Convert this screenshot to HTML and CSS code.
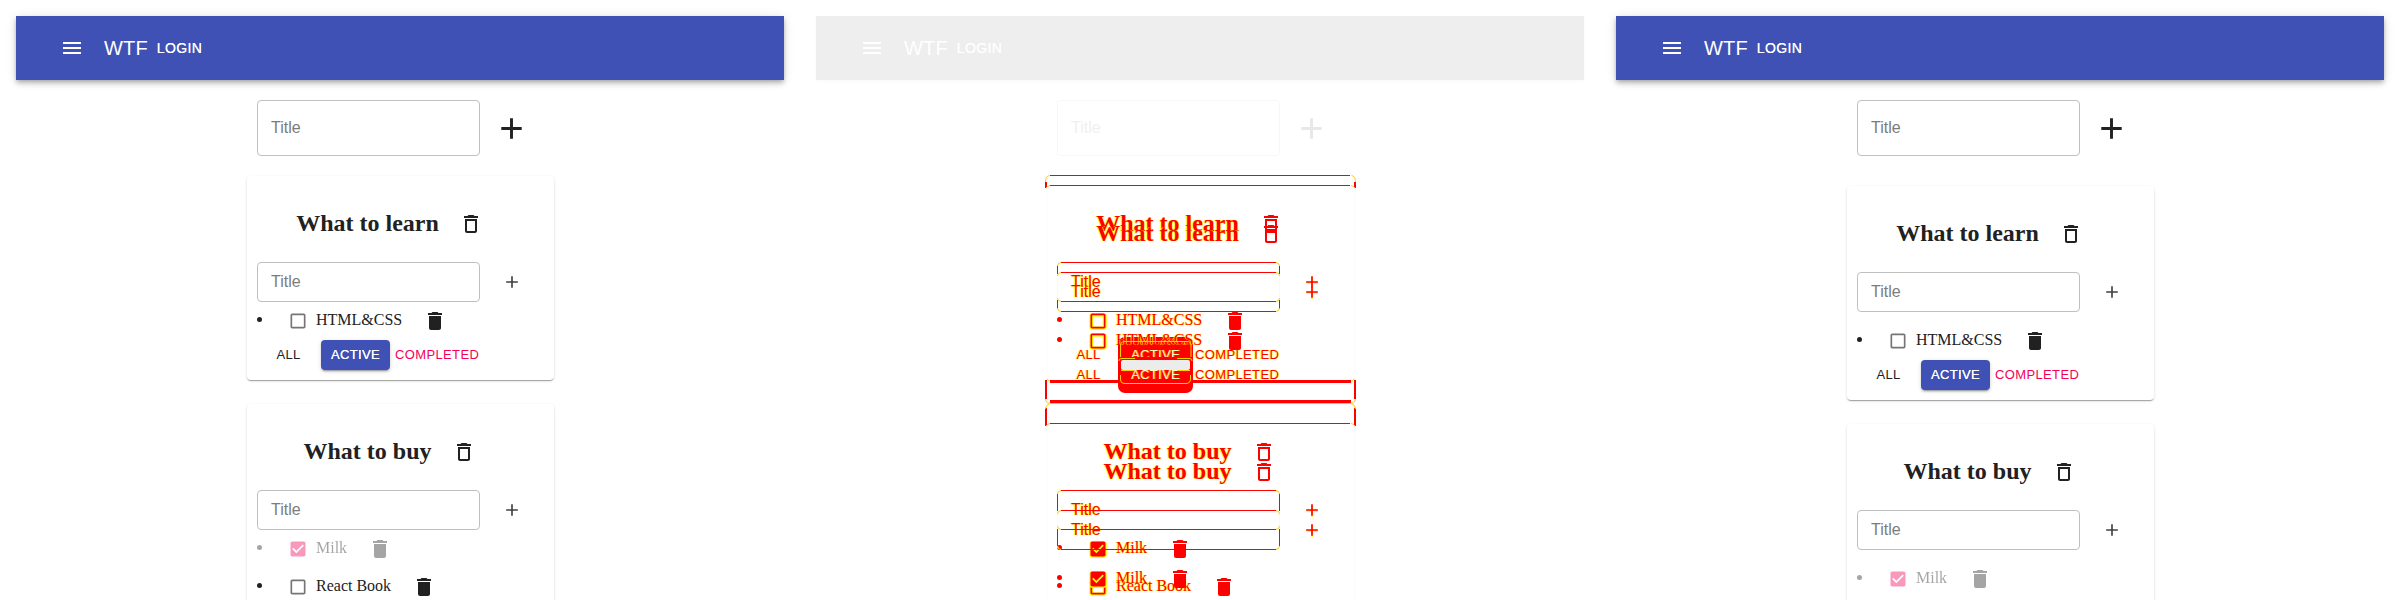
FILE: index.html
```
<!DOCTYPE html>
<html lang="en">
<head>
<meta charset="utf-8">
<title>WTF</title>
<link rel="stylesheet" href="styles.css">
</head>
<body>
<svg class="defs" aria-hidden="true">
  <symbol id="menu" viewBox="0 0 24 24"><path d="M3 18h18v-2H3v2zm0-5h18v-2H3v2zm0-7v2h18V6H3z"/></symbol>
  <symbol id="plus" viewBox="0 0 24 24"><path d="M19 13h-6v6h-2v-6H5v-2h6V5h2v6h6v2z"/></symbol>
  <symbol id="bin-o" viewBox="0 0 24 24"><path d="M6 19c0 1.100.9 2 2 2h8c1.100 0 2-.9 2-2V7H6v12zM8 9h8v10H8V9zm7.500-5l-1-1h-5l-1 1H5v2h14V4z"/></symbol>
  <symbol id="bin" viewBox="0 0 24 24"><path d="M6 19c0 1.100.9 2 2 2h8c1.100 0 2-.9 2-2V7H6v12zM19 4h-3.500l-1-1h-5l-1 1H5v2h14V4z"/></symbol>
  <symbol id="box" viewBox="0 0 24 24"><path d="M19 5v14H5V5h14m0-2H5c-1.100 0-2 .9-2 2v14c0 1.100.9 2 2 2h14c1.100 0 2-.9 2-2V5c0-1.100-.9-2-2-2z"/></symbol>
  <symbol id="checked" viewBox="0 0 24 24"><path d="M19 3H5c-1.110 0-2 .9-2 2v14c0 1.100.89 2 2 2h14c1.110 0 2-.9 2-2V5c0-1.100-.89-2-2-2zm-9 14l-5-5 1.410-1.410L10 14.170l7.590-7.590L19 8l-9 9z"/></symbol>
</svg>
<main class="panels">
  <section class="panel">
    <header class="bar"><svg class="i24"><use href="#menu"/></svg><span class="brand">WTF</span><span class="login">LOGIN</span></header>
    <div class="add"><div class="field">Title</div><svg class="i35"><use href="#plus"/></svg></div>
    <div class="cards">
      <article class="card">
        <div class="head"><h3>What to learn</h3><svg class="i24"><use href="#bin-o"/></svg></div>
        <div class="row"><div class="field">Title</div><svg class="i20"><use href="#plus"/></svg></div>
        <ul><li><svg class="check"><use href="#box"/></svg><span>HTML&amp;CSS</span><svg class="i24"><use href="#bin"/></svg></li></ul>
        <div class="filters"><span class="all">ALL</span><span class="active">ACTIVE</span><span class="completed">COMPLETED</span></div>
      </article>
      <article class="card">
        <div class="head"><h3>What to buy</h3><svg class="i24"><use href="#bin-o"/></svg></div>
        <div class="row"><div class="field">Title</div><svg class="i20"><use href="#plus"/></svg></div>
        <ul>
          <li class="done"><svg class="check"><use href="#checked"/></svg><span>Milk</span><svg class="i24"><use href="#bin"/></svg></li>
          <li class="next"><svg class="check"><use href="#box"/></svg><span>React Book</span><svg class="i24"><use href="#bin"/></svg></li>
        </ul>
      </article>
    </div>
  </section>

  <section class="panel diff">
    <header class="bar"><svg class="i24"><use href="#menu"/></svg><span class="brand">WTF</span><span class="login">LOGIN</span></header>
    <div class="add"><div class="field">Title</div><svg class="i35"><use href="#plus"/></svg></div>
    <div class="stack">
      <div class="cards">
        <article class="card">
          <div class="head"><h3>What to learn</h3><svg class="i24"><use href="#bin-o"/></svg></div>
          <div class="row"><div class="field">Title</div><svg class="i20"><use href="#plus"/></svg></div>
          <ul><li><svg class="check"><use href="#box"/></svg><span>HTML&amp;CSS</span><svg class="i24"><use href="#bin"/></svg></li></ul>
          <div class="filters"><span class="all">ALL</span><span class="active">ACTIVE</span><span class="completed">COMPLETED</span></div>
        </article>
        <article class="card">
          <div class="head"><h3>What to buy</h3><svg class="i24"><use href="#bin-o"/></svg></div>
          <div class="row"><div class="field">Title</div><svg class="i20"><use href="#plus"/></svg></div>
          <ul>
            <li class="done"><svg class="check"><use href="#checked"/></svg><span>Milk</span><svg class="i24"><use href="#bin"/></svg></li>
            <li class="next"><svg class="check"><use href="#box"/></svg><span>React Book</span><svg class="i24"><use href="#bin"/></svg></li>
          </ul>
        </article>
      </div>
      <div class="cards spaced">
        <article class="card">
          <div class="head"><h3>What to learn</h3><svg class="i24"><use href="#bin-o"/></svg></div>
          <div class="row"><div class="field">Title</div><svg class="i20"><use href="#plus"/></svg></div>
          <ul><li><svg class="check"><use href="#box"/></svg><span>HTML&amp;CSS</span><svg class="i24"><use href="#bin"/></svg></li></ul>
          <div class="filters"><span class="all">ALL</span><span class="active">ACTIVE</span><span class="completed">COMPLETED</span></div>
        </article>
        <article class="card">
          <div class="head"><h3>What to buy</h3><svg class="i24"><use href="#bin-o"/></svg></div>
          <div class="row"><div class="field">Title</div><svg class="i20"><use href="#plus"/></svg></div>
          <ul><li class="done"><svg class="check"><use href="#checked"/></svg><span>Milk</span><svg class="i24"><use href="#bin"/></svg></li></ul>
        </article>
      </div>
    </div>
    <svg class="marks" viewBox="0 0 800 600">
      <rect x="321" y="360" width="69" height="10" rx="2" fill="#ececec"/>
      <g class="edge">
        <path d="M250 175.500H550M250 185.500H550M250 423.500H550"/>
        <path d="M261 262.500H476M261 272.500H476M261 301.500H476M261 311.500H476"/>
        <path d="M261 490.500H476M261 510.500H476M261 529.500H476M261 549.500H476"/>
        <path d="M257.500 266v8M479.500 266v8M257.500 300v9M479.500 300v9M257.500 494v17M479.500 494v17M257.500 529v17M479.500 529v17"/>
      </g>
      <g class="thick"><path d="M246 182v6M555 182v6M246 380v19M555 380v19M246 408v18M555 408v18"/></g>
      <g class="heavy"><path d="M250 381.500H318M393 381.500H551M250 401.500H551"/></g>
      <g class="corner">
        <path d="M245.500 182q0-6 4-6.500M555.500 182q0-6-4-6.500M246 188q1-2 4-2.500M555 188q-1-2-4-2.500"/>
        <path d="M245.500 399q0 4 5 4.500H550q5-.5 5.500-4.500M245.500 409q0-4 4-5.500M555.500 409q0-4-4-5.500M247 379q1 2 3 2M554 379q-1 2-3 2M246 426q1-2 4-2.500M555 426q-1-2-4-2.500"/>
        <path d="M257.500 266q0-3 3.500-3.500M479.500 266q0-3-3.500-3.500M257.500 276q0-3 3.500-3.500M479.500 276q0-3-3.500-3.500M257.500 298q0 3 3.500 3.500M479.500 298q0 3-3.500 3.500M257.500 308q0 3 3.500 3.500M479.500 308q0 3-3.500 3.500"/>
        <path d="M257.500 494q0-3 3.500-3.500M479.500 494q0-3-3.500-3.500M257.500 514q0-3 3.500-3.500M479.500 514q0-3-3.500-3.500M257.500 526q0 3 3.500 3.500M479.500 526q0 3-3.500 3.500M257.500 546q0 3 3.500 3.500M479.500 546q0 3-3.500 3.500"/>
        <path d="M320.500 357V345q0-3 3-3.500H388q3 0 3 3.500V357M335 358.500H321q-2 0-2 2.500M377 358.500H390q2 0 2 2.500M321 370.500H334M377 370.500H390M320.500 375v5q0 3 3.500 3.500H387q3-.5 3.500-3.500v-5"/>
      </g>
    </svg>
  </section>

  <section class="panel">
    <header class="bar"><svg class="i24"><use href="#menu"/></svg><span class="brand">WTF</span><span class="login">LOGIN</span></header>
    <div class="add"><div class="field">Title</div><svg class="i35"><use href="#plus"/></svg></div>
    <div class="cards spaced">
      <article class="card">
        <div class="head"><h3>What to learn</h3><svg class="i24"><use href="#bin-o"/></svg></div>
        <div class="row"><div class="field">Title</div><svg class="i20"><use href="#plus"/></svg></div>
        <ul><li><svg class="check"><use href="#box"/></svg><span>HTML&amp;CSS</span><svg class="i24"><use href="#bin"/></svg></li></ul>
        <div class="filters"><span class="all">ALL</span><span class="active">ACTIVE</span><span class="completed">COMPLETED</span></div>
      </article>
      <article class="card">
        <div class="head"><h3>What to buy</h3><svg class="i24"><use href="#bin-o"/></svg></div>
        <div class="row"><div class="field">Title</div><svg class="i20"><use href="#plus"/></svg></div>
        <ul><li class="done"><svg class="check"><use href="#checked"/></svg><span>Milk</span><svg class="i24"><use href="#bin"/></svg></li></ul>
      </article>
    </div>
  </section>
</main>
</body>
</html>
```
FILE: styles.css
```
* { box-sizing: border-box; }
html, body { margin: 0; height: 600px; overflow: hidden; }
body { background: #fff; color: #212121; font-family: "Liberation Sans", Arial, sans-serif; }
svg { display: block; flex: none; fill: currentColor; }
.defs { position: absolute; width: 0; height: 0; }
.panels { display: grid; grid-template-columns: repeat(3, 800px); height: 600px; }
.panel { position: relative; height: 600px; padding: 16px; overflow: hidden; }
.i24 { width: 24px; height: 24px; }
.i20 { width: 20px; height: 20px; }
.i35 { width: 35px; height: 35px; }

.bar {
  display: flex; align-items: center; height: 64px; padding-left: 44px;
  background: #3f51b5; color: #fff;
  box-shadow: 0 2px 4px -1px rgba(0,0,0,.2), 0 4px 5px rgba(0,0,0,.14), 0 1px 10px rgba(0,0,0,.12);
}
.brand { margin-left: 20px; font-size: 20px; letter-spacing: .15px; }
.login { margin-left: 9px; font-size: 14px; letter-spacing: .4px; text-shadow: 0 0 .5px currentColor; }

.add { display: flex; align-items: center; height: 56px; margin: 20px 0 0 241px; }
.add .i35 { margin-left: 14px; }
.field {
  display: flex; align-items: center; width: 223px; height: 100%; padding-left: 13px;
  border: 1px solid #c0c0c0; border-radius: 4px; color: #7c7c7c; font-size: 16px;
}

.cards { display: flex; flex-direction: column; gap: 24px; width: 307px; margin: 20px 0 0 231px; }
.cards.spaced { margin-top: 30px; }
.card {
  padding: 10px; border-radius: 4px; min-height: 204px;
  box-shadow: 0 2px 1px -1px rgba(0,0,0,.2), 0 1px 1px rgba(0,0,0,.14), 0 1px 3px rgba(0,0,0,.12);
}
.head { display: flex; align-items: center; justify-content: center; height: 76px; padding-right: 10px; }
.head .i24 { margin: 0 12px 0 20px; }
h3 { margin: 0; padding-bottom: 2px; font: bold 24px "Liberation Serif", "Times New Roman", serif; }
.row { display: flex; align-items: center; height: 40px; }
.row .i20 { margin-left: 22px; color: #424242; }
ul { margin: 0; padding: 0; list-style: none; font: 16px "Liberation Serif", "Times New Roman", serif; }
.spaced ul { margin-top: 10px; }
li { display: flex; align-items: center; height: 38px; }
li::before { content: ""; width: 5px; height: 5px; margin: 0 26px 3px 0; border-radius: 50%; background: currentColor; }
li span { margin: 0 21px 2px 8px; }
.check { width: 20px; height: 20px; color: #757575; }
.done { opacity: .4; }
.done .check { color: #f50057; }

.filters { display: flex; align-items: center; height: 30px; font-size: 13px; letter-spacing: .37px; }
.filters span { display: flex; align-items: center; justify-content: center; height: 30px; padding-bottom: 2px; }
.filters .all { width: 64px; padding-right: 1px; }
.active {
  width: 69px; border-radius: 4px; background: #3f51b5; color: #fff; text-shadow: 0 0 .5px #fff;
  box-shadow: 0 3px 1px -2px rgba(0,0,0,.2), 0 2px 2px rgba(0,0,0,.14), 0 1px 5px rgba(0,0,0,.12);
}
.completed { padding-left: 5px; color: #f50057; }

.diff .bar { background: #eee; box-shadow: 0 2px 5px rgba(0,0,0,.025); }
.diff .add .field { border-color: #f7f7f7; color: #f0f0f0; }
.diff .add .i35 { color: #e8e8e8; }
.stack { display: grid; height: 430px; align-items: start; }
.stack .cards { grid-area: 1 / 1; }
.stack .card { box-shadow: -1px 0 #fbfbfb, 1px 0 #fbfbfb; color: #f00; }
.stack h3, .stack li span, .stack .all, .stack .completed, .stack .field {
  color: #f00; text-shadow: 1px 0 rgba(255,255,0,.75), -1px 0 rgba(255,255,0,.75);
}
.stack .field { border-color: transparent; border-left-color: #f9f9f9; border-right-color: #f9f9f9; }
.stack .row .i20 { color: #f00; filter: drop-shadow(0 1px #ff0); }
.stack .check, .stack .done .check { color: #f00; filter: drop-shadow(1px 0 #ff0) drop-shadow(-1px 0 #ff0) drop-shadow(0 1px #ff0); }
.stack .done { opacity: 1; }
.stack .active { color: #ffb; background: #f00; box-shadow: 0 0 0 3px #f00; text-shadow: 1px 0 rgba(255,255,0,.5); }
.marks { position: absolute; inset: 0; width: 800px; height: 600px; fill: none; }
.edge { stroke: #f00; stroke-width: 1; }
.thick { stroke: #f00; stroke-width: 2; }
.heavy { stroke: #f00; stroke-width: 3; }
.corner { stroke: #fc0; stroke-width: 1; }
```
